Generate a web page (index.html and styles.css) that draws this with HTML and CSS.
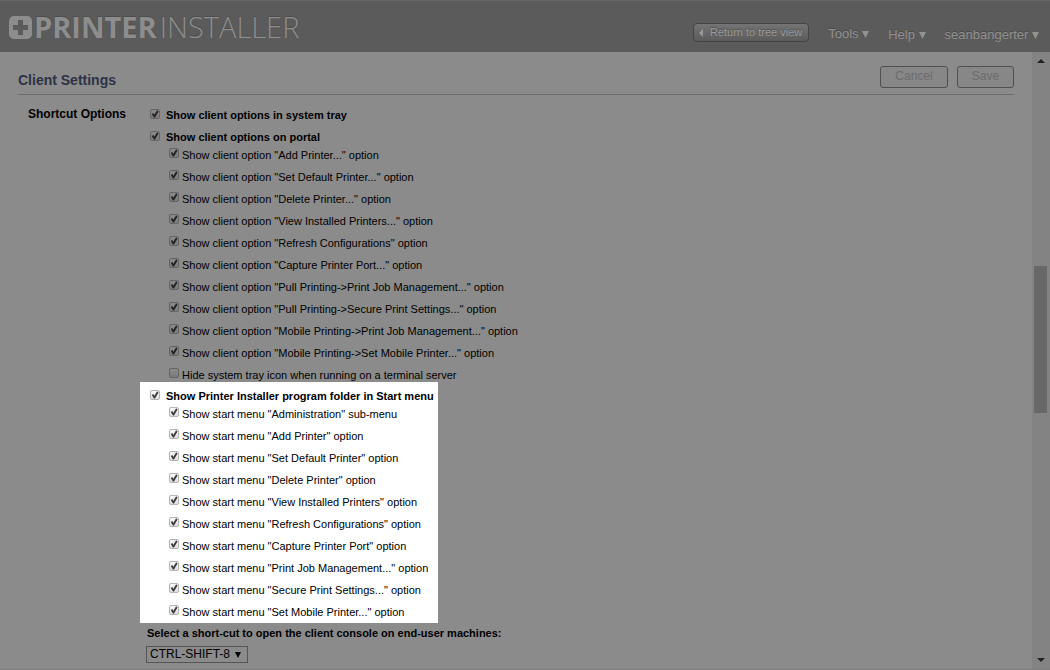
FILE: index.html
```html
<!DOCTYPE html>
<html lang="en">
<head>
<meta charset="utf-8">
<title>Printer Installer - Client Settings</title>
<link rel="stylesheet" href="styles.css">
</head>
<body>
<header class="topbar">
  <div class="logo">
    <svg class="logo-mark" viewBox="0 0 23 23" aria-hidden="true"><path fill-rule="evenodd" d="M5 0h13a5 5 0 0 1 5 5v13a5 5 0 0 1-5 5H5a5 5 0 0 1-5-5V5a5 5 0 0 1 5-5zM9 4v5H4v5h5v5h5v-5h5V9h-5V4z"/></svg>
    <span class="logo-text"><b>PRINTER</b><span class="logo-light">INSTALLER</span></span>
  </div>
  <nav class="menu">
    <button class="return" type="button"><svg class="return-arrow" viewBox="0 0 4 8" aria-hidden="true"><path d="M4 0v8L0 4z"/></svg>Return to tree view</button>
    <a class="menu-link tools" href="#">Tools <svg class="caret" viewBox="0 0 7 7" aria-hidden="true"><path d="M0 0h7L3.500 7z"/></svg></a>
    <a class="menu-link" href="#">Help <svg class="caret" viewBox="0 0 7 7" aria-hidden="true"><path d="M0 0h7L3.500 7z"/></svg></a>
    <a class="menu-link" href="#">seanbangerter <svg class="caret" viewBox="0 0 7 7" aria-hidden="true"><path d="M0 0h7L3.500 7z"/></svg></a>
  </nav>
</header>
<div class="body">
  <main class="content">
    <div class="title-row">
      <h1 class="title">Client Settings</h1>
      <div class="actions">
        <button class="action cancel" type="button" disabled>Cancel</button>
        <button class="action" type="button" disabled>Save</button>
      </div>
    </div>
    <section class="settings">
      <h2 class="section-name">Shortcut Options</h2>
      <div class="options">
        <label class="main-option spaced"><input type="checkbox" checked>Show client options in system tray</label>
        <label class="main-option"><input type="checkbox" checked>Show client options on portal</label>
        <div class="sub-options">
          <label class="sub-option"><input type="checkbox" checked>Show client option "Add Printer..." option</label>
          <label class="sub-option"><input type="checkbox" checked>Show client option "Set Default Printer..." option</label>
          <label class="sub-option"><input type="checkbox" checked>Show client option "Delete Printer..." option</label>
          <label class="sub-option"><input type="checkbox" checked>Show client option "View Installed Printers..." option</label>
          <label class="sub-option"><input type="checkbox" checked>Show client option "Refresh Configurations" option</label>
          <label class="sub-option"><input type="checkbox" checked>Show client option "Capture Printer Port..." option</label>
          <label class="sub-option"><input type="checkbox" checked>Show client option "Pull Printing-&gt;Print Job Management..." option</label>
          <label class="sub-option"><input type="checkbox" checked>Show client option "Pull Printing-&gt;Secure Print Settings..." option</label>
          <label class="sub-option"><input type="checkbox" checked>Show client option "Mobile Printing-&gt;Print Job Management..." option</label>
          <label class="sub-option"><input type="checkbox" checked>Show client option "Mobile Printing-&gt;Set Mobile Printer..." option</label>
          <label class="sub-option"><input type="checkbox">Hide system tray icon when running on a terminal server</label>
        </div>
        <div class="highlight">
          <label class="main-option"><input type="checkbox" checked>Show Printer Installer program folder in Start menu</label>
          <div class="sub-options">
            <label class="sub-option"><input type="checkbox" checked>Show start menu "Administration" sub-menu</label>
            <label class="sub-option"><input type="checkbox" checked>Show start menu "Add Printer" option</label>
            <label class="sub-option"><input type="checkbox" checked>Show start menu "Set Default Printer" option</label>
            <label class="sub-option"><input type="checkbox" checked>Show start menu "Delete Printer" option</label>
            <label class="sub-option"><input type="checkbox" checked>Show start menu "View Installed Printers" option</label>
            <label class="sub-option"><input type="checkbox" checked>Show start menu "Refresh Configurations" option</label>
            <label class="sub-option"><input type="checkbox" checked>Show start menu "Capture Printer Port" option</label>
            <label class="sub-option"><input type="checkbox" checked>Show start menu "Print Job Management..." option</label>
            <label class="sub-option"><input type="checkbox" checked>Show start menu "Secure Print Settings..." option</label>
            <label class="sub-option"><input type="checkbox" checked>Show start menu "Set Mobile Printer..." option</label>
          </div>
        </div>
        <div class="shortcut">
          <label class="shortcut-label" for="shortcut">Select a short-cut to open the client console on end-user machines:</label>
          <select class="shortcut-select" id="shortcut"><option>CTRL-SHIFT-8</option></select>
        </div>
      </div>
    </section>
  </main>
  <div class="scrollbar" aria-hidden="true">
    <svg class="scroll-arrow" viewBox="0 0 8 4"><path d="M4 0l4 4H0z"/></svg>
    <div class="track"><div class="thumb"></div></div>
    <svg class="scroll-arrow" viewBox="0 0 8 4"><path d="M0 0h8L4 4z"/></svg>
  </div>
</div>
</body>
</html>
```
FILE: styles.css
```css
* { box-sizing: border-box; }

body {
  margin: 0;
  height: 100vh;
  display: flex;
  flex-direction: column;
  overflow: hidden;
  background: #8b8b8b;
  color: #000;
  font: 11px/14px "Liberation Sans", Arial, sans-serif;
}

button, select, input { font: inherit; margin: 0; }

.topbar {
  flex: none;
  display: flex;
  justify-content: space-between;
  height: 52px;
  padding: 0 11px 0 9px;
  background: #5b5b5b;
  border-top: 1px solid #666;
}

.logo { display: flex; align-items: center; gap: 2px; color: #8d8d8d; }
.logo-mark { width: 23px; height: 23px; fill: #8d8d8d; margin-top: 2px; }
.logo-text {
  display: flex;
  gap: 3px;
  font: 29px/40px "Open Sans", "Noto Sans", sans-serif;
  text-shadow: 0 -1px 1px #4c4c4c;
}
.logo-light { font-weight: 300; }

.menu { display: flex; align-items: flex-start; gap: 19px; padding-top: 22px; }
.return {
  display: flex;
  align-items: center;
  gap: 7px;
  height: 19px;
  padding: 0 6px 0 5px;
  border: 1px solid #444;
  border-radius: 4px;
  background: linear-gradient(#747474, #5c5c5c);
  color: #9a9a9a;
  line-height: 17px;
  text-shadow: 0 -1px 1px #4c4c4c;
}
.return-arrow { width: 4px; height: 8px; fill: #9a9a9a; }
.menu-link {
  padding-top: 3px;
  color: #929292;
  font-size: 13px;
  line-height: 18px;
  text-decoration: none;
  text-shadow: 0 -1px 0 #484848;
}
.tools { padding-top: 2px; }
.caret { width: 7px; height: 7px; fill: #929292; }

.body { flex: 1; display: flex; min-height: 0; border-bottom: 1px solid #808080; }
.content { flex: 1; padding: 12px 18px 0; overflow: hidden; }
.title-row {
  display: flex;
  justify-content: space-between;
  height: 31px;
  border-bottom: 1px solid #6d6d6d;
}
.title { margin: 0; padding-top: 7px; font-size: 14px; line-height: 18px; color: #2b3347; }
.actions { display: flex; gap: 9px; padding-top: 2px; }
.action {
  width: 57px;
  height: 22px;
  padding: 0 0 3px;
  border: 1px solid #505050;
  border-radius: 3px;
  background: #878787;
  color: #6c6c6c;
  font-size: 12px;
  line-height: 16px;
}
.cancel { width: 68px; }

.settings { display: flex; padding: 9px 0 0 10px; }
.section-name { width: 112px; margin: 0; padding-top: 3px; font-size: 12px; line-height: 14px; }
.options { display: flex; flex-direction: column; align-items: flex-start; }

.main-option {
  display: flex;
  align-items: flex-start;
  gap: 6px;
  padding: 4px 0 0 10px;
  font-weight: bold;
  white-space: nowrap;
}
.spaced { margin-bottom: 4px; }
.sub-option {
  display: flex;
  align-items: flex-start;
  gap: 3px;
  height: 22px;
  padding: 4px 0 0 29px;
  white-space: nowrap;
}

input[type="checkbox"] {
  appearance: none;
  flex: none;
  display: grid;
  place-items: center;
  width: 10px;
  height: 10px;
  margin-top: 1px;
  border: 1px solid #646464;
  border-radius: 2px;
  background: linear-gradient(#8b8b8b, #7b7b7b);
}
.sub-option input[type="checkbox"] { margin-top: 0; }
input[type="checkbox"]:checked::before {
  content: "";
  width: 8px;
  height: 8px;
  background: #222;
  clip-path: polygon(10% 50%, 28% 38%, 43% 60%, 76% 4%, 95% 18%, 50% 94%, 36% 94%);
}

.highlight { width: 298px; margin-top: -4px; padding-top: 3px; background: #fff; }
.highlight input[type="checkbox"] {
  border-color: #b4b4b4;
  background: linear-gradient(#fafafa, #dedede);
}
.highlight input[type="checkbox"]:checked::before { background: #3d3d3d; }

.shortcut {
  display: flex;
  flex-direction: column;
  align-items: flex-start;
  gap: 3px;
  padding: 3px 0 0 6px;
}
.shortcut-label { padding-left: 1px; font-weight: bold; }
.shortcut-select {
  appearance: none;
  width: 102px;
  height: 17px;
  margin-top: 3px;
  padding: 0 3px;
  border: 1px solid #555;
  border-radius: 0;
  color: #000;
  font-size: 12px;
  line-height: 15px;
  background: #8b8b8b url("data:image/svg+xml,%3Csvg xmlns='http://www.w3.org/2000/svg' viewBox='0 0 6 6'%3E%3Cpath d='M0 0h6L3 6z'/%3E%3C/svg%3E") no-repeat right 6px center / 6px 6px;
}

.scrollbar {
  flex: none;
  display: flex;
  flex-direction: column;
  align-items: center;
  width: 18px;
  padding: 7px 1px 7px 0;
  background: #838383;
}
.scroll-arrow { flex: none; width: 8px; height: 4px; fill: #222; }
.track { flex: 1; width: 13px; min-height: 0; padding-top: 203px; }
.thumb { height: 25%; min-height: 147px; background: #686868; }
```
